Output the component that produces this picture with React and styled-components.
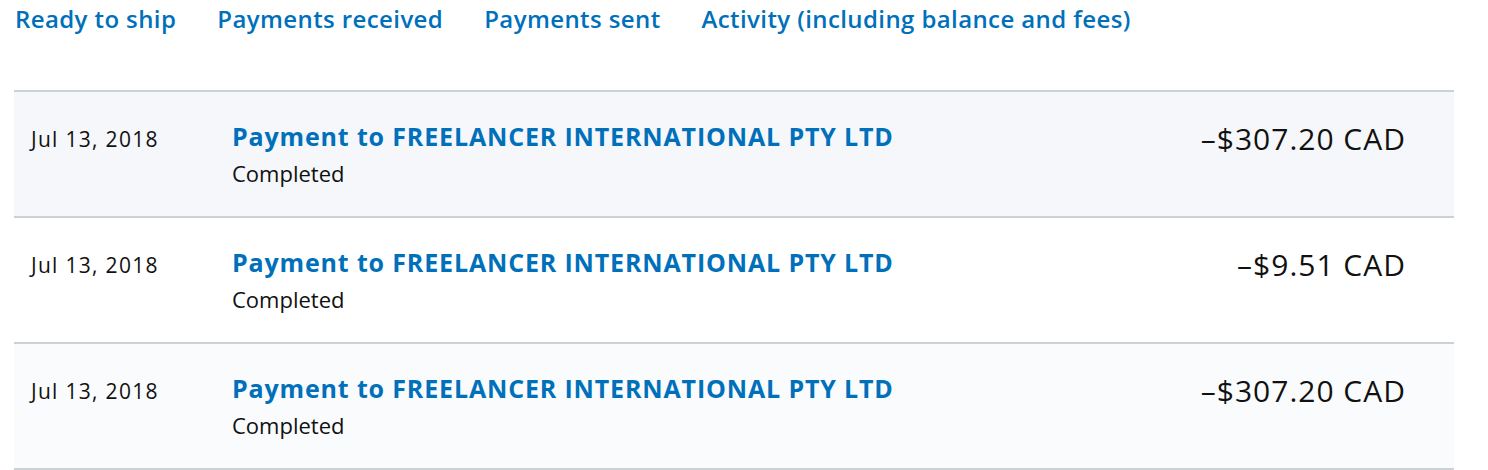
import React from 'react'
import styled, { createGlobalStyle } from 'styled-components'

const GlobalStyle = createGlobalStyle`
  body {
    margin: 0;
    background: #fff;
    font-family: "Open Sans", "Noto Sans", sans-serif;
  }
`

const Page = styled.div`
  width: 1488px;
  padding-left: 14px;
  box-sizing: border-box;
`

const Tabs = styled.nav`
  display: flex;
  gap: 41px;
  height: 90px;
  padding-left: 1px;
`

const Tab = styled.a`
  font-size: 24px;
  line-height: 38px;
  font-weight: 600;
  letter-spacing: 0.4px;
  color: #0070ba;
  text-decoration: none;
  cursor: pointer;
`

const Table = styled.div`
  width: 1440px;
  border-top: 2px solid #cbd2d6;
`

const Row = styled.div`
  display: grid;
  grid-template-columns: 201px 1fr auto;
  box-sizing: border-box;
  height: 126px;
  padding: 29px 48px 0 17px;
  border-bottom: 2px solid #cbd2d6;
  background: ${(props) => props.bg || '#fff'};
`

const DateCell = styled.div`
  font-size: 21px;
  line-height: 30px;
  letter-spacing: 1.3px;
  margin-top: 3px;
  color: #111;
`

const Title = styled.div`
  font-size: 25px;
  line-height: 30px;
  font-weight: 700;
  letter-spacing: 0.85px;
  color: #0070ba;
`

const Status = styled.div`
  font-size: 22px;
  line-height: 28px;
  margin-top: 8px;
  color: #111;
`

const Amount = styled.div`
  font-size: 30px;
  line-height: 30px;
  letter-spacing: 1px;
  margin-top: 3px;
  color: #111;
  text-align: right;
`

const rows = [
  { date: 'Jul 13, 2018', amount: '–$307.20 CAD', bg: '#f5f7fa' },
  { date: 'Jul 13, 2018', amount: '–$9.51 CAD', bg: '#fff' },
  { date: 'Jul 13, 2018', amount: '–$307.20 CAD', bg: '#fafbfd' }
]

const App = () => (
  <Page>
    <GlobalStyle />
    <Tabs>
      <Tab>Ready to ship</Tab>
      <Tab>Payments received</Tab>
      <Tab>Payments sent</Tab>
      <Tab>Activity (including balance and fees)</Tab>
    </Tabs>
    <Table>
      {rows.map((r, i) => (
        <Row key={i} bg={r.bg}>
          <DateCell>{r.date}</DateCell>
          <div>
            <Title>Payment to FREELANCER INTERNATIONAL PTY LTD</Title>
            <Status>Completed</Status>
          </div>
          <Amount>{r.amount}</Amount>
        </Row>
      ))}
    </Table>
  </Page>
)

export default App
